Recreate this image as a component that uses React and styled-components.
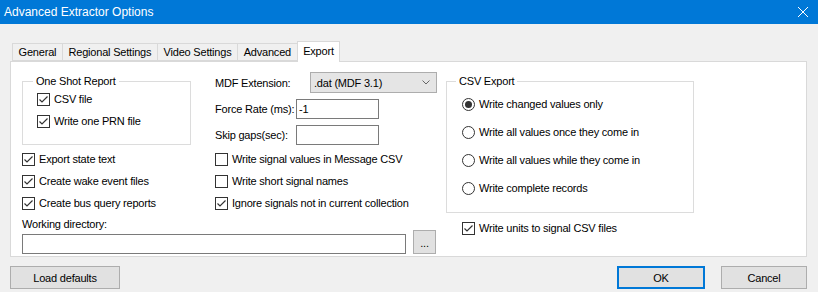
import React from "react";
import styled, { createGlobalStyle } from "styled-components";

const GlobalStyle = createGlobalStyle`
  html, body {
    margin: 0;
    padding: 0;
    background: #f0f0f0;
  }
  * {
    box-sizing: border-box;
  }
`;

const Window = styled.div`
  width: 818px;
  height: 292px;
  background: #f0f0f0;
  font-family: "Liberation Sans", Arial, sans-serif;
  font-size: 11px;
  letter-spacing: -0.2px;
  color: #000;
  display: flex;
  flex-direction: column;
  overflow: hidden;
`;

const TitleBar = styled.div`
  height: 24px;
  background: #0078d7;
  color: #fff;
  font-size: 12px;
  letter-spacing: 0;
  display: flex;
  align-items: center;
  justify-content: space-between;
  padding: 0 9px 0 4px;
`;

const CloseButton = styled.span`
  display: flex;
  width: 12px;
  height: 12px;
`;

const Body = styled.div`
  flex: 1;
  display: flex;
  flex-direction: column;
  padding: 17px 11px 0 10px;
`;

const TabStrip = styled.div`
  display: flex;
  align-items: flex-end;
  height: 20px;
  padding-left: 3px;
  position: relative;
  z-index: 1;
`;

const Tab = styled.div`
  height: ${(p) => (p.active ? "21px" : "18px")};
  margin-bottom: ${(p) => (p.active ? "-1px" : "0")};
  margin-left: -1px;
  padding: ${(p) => (p.active ? "2px 5.6px 0" : "1px 5.6px 0")};
  border: 1px solid #d9d9d9;
  border-bottom: ${(p) => (p.active ? "none" : "1px solid #d9d9d9")};
  background: ${(p) => (p.active ? "#fff" : "#f0f0f0")};
  white-space: nowrap;
  line-height: 14px;
`;

const Panel = styled.div`
  height: 196px;
  background: #fff;
  border: 1px solid #d9d9d9;
  padding: 10px 0 0 11px;
  display: grid;
  grid-template-columns: 415px 248px;
  column-gap: 9px;
  align-items: start;
`;

const LeftArea = styled.div`
  display: grid;
  grid-template-columns: 193px 222px;
`;

const RightArea = styled.div`
  display: flex;
  flex-direction: column;
`;

const Group = styled.fieldset`
  margin: 3px 0 0;
  padding: 0 0 ${(p) => p.$bottom || "3px"} ${(p) => p.$inset || "14px"};
  border: 1px solid #dcdcdc;
  width: ${(p) => p.$width};
  min-width: 0;
`;

const Legend = styled.legend`
  margin-left: ${(p) => p.$offset || "-4px"};
  padding: 0 3px;
  line-height: 13px;
`;

const Row = styled.label`
  display: flex;
  align-items: center;
  gap: 4px;
  height: ${(p) => p.$h || "22px"};
  white-space: nowrap;
`;

const Box = styled.span`
  width: 13px;
  height: 13px;
  border: 1px solid #333;
  background: #fff;
  display: flex;
  align-items: center;
  justify-content: center;
  flex: none;
`;

const Round = styled.span`
  width: 13px;
  height: 13px;
  border: 1px solid #333;
  border-radius: 50%;
  background: #fff;
  display: flex;
  align-items: center;
  justify-content: center;
  flex: none;

  &::after {
    content: "";
    display: ${(p) => (p.checked ? "block" : "none")};
    width: 7px;
    height: 7px;
    border-radius: 50%;
    background: #333;
  }
`;

const Form = styled.div`
  display: flex;
  flex-direction: column;
  gap: 6px;
`;

const FieldRow = styled.div`
  display: flex;
  align-items: center;
`;

const FieldLabel = styled.span`
  width: ${(p) => p.$width || "auto"};
  white-space: nowrap;
`;

const Select = styled.div`
  width: 127px;
  height: 21px;
  background: #e5e5e5;
  border: 1px solid #adadad;
  display: flex;
  align-items: center;
  justify-content: space-between;
  padding: 0 6px 0 3px;
`;

const Input = styled.div`
  width: ${(p) => p.$width || "83px"};
  height: 20px;
  border: 1px solid #7a7a7a;
  background: #fff;
  padding: 2px 2px;
  line-height: 14px;
`;

const Checks = styled.div`
  display: flex;
  flex-direction: column;
  margin-top: ${(p) => p.$top || "3px"};
  padding-left: ${(p) => p.$inset || "0"};
`;

const Directory = styled.div`
  grid-column: 1 / 3;
  display: flex;
  flex-direction: column;
  margin-top: 4px;
`;

const DirRow = styled.div`
  display: flex;
  align-items: flex-end;
  gap: 7px;
`;

const SmallButton = styled.div`
  width: 23px;
  height: 24px;
  background: #e1e1e1;
  border: 1px solid #adadad;
  display: flex;
  align-items: flex-end;
  justify-content: center;
  padding-bottom: 5px;
  line-height: 10px;
`;

const Spacer = styled.div`
  height: 2px;
`;

const Footer = styled.div`
  display: flex;
  align-items: center;
  margin-top: 9px;
  gap: 16px;
`;

const Button = styled.div`
  width: ${(p) => p.$width};
  height: 23px;
  background: #e1e1e1;
  border: ${(p) => (p.$default ? "2px solid #0078d7" : "1px solid #adadad")};
  display: flex;
  align-items: center;
  justify-content: center;
  margin-left: ${(p) => (p.$push ? "auto" : "0")};
`;

const Check = ({ checked }) => (
  <Box>
    {checked && (
      <svg width="11" height="11" viewBox="0 0 11 11">
        <path d="M1.5 5.5 L4 8 L9.5 2.5" fill="none" stroke="#333" strokeWidth="1.2" />
      </svg>
    )}
  </Box>
);

const CheckRow = ({ checked, children, h }) => (
  <Row $h={h}>
    <Check checked={checked} />
    <span>{children}</span>
  </Row>
);

const RadioRow = ({ checked, children }) => (
  <Row $h="28px">
    <Round checked={checked} />
    <span>{children}</span>
  </Row>
);

const tabs = ["General", "Regional Settings", "Video Settings", "Advanced", "Export"];
const radios = [
  "Write changed values only",
  "Write all values once they come in",
  "Write all values while they come in",
  "Write complete records",
];

export default function App() {
  return (
    <Window>
      <GlobalStyle />
      <TitleBar>
        <span>Advanced Extractor Options</span>
        <CloseButton>
          <svg width="12" height="12" viewBox="0 0 12 12">
            <path d="M1 1 L11 11 M11 1 L1 11" stroke="#fff" strokeWidth="1" fill="none" />
          </svg>
        </CloseButton>
      </TitleBar>
      <Body>
        <TabStrip>
          {tabs.map((t) => (
            <Tab key={t} active={t === "Export"}>
              {t}
            </Tab>
          ))}
        </TabStrip>
        <Panel>
          <LeftArea>
            <Group $width="169px">
              <Legend>One Shot Report</Legend>
              <CheckRow checked>CSV file</CheckRow>
              <CheckRow checked>Write one PRN file</CheckRow>
            </Group>
            <Form>
              <FieldRow>
                <FieldLabel $width="95px">MDF Extension:</FieldLabel>
                <Select>
                  <span>.dat (MDF 3.1)</span>
                  <svg width="8" height="5" viewBox="0 0 8 5">
                    <path d="M0.5 0.5 L4 4 L7.5 0.5" fill="none" stroke="#666" strokeWidth="1" />
                  </svg>
                </Select>
              </FieldRow>
              <FieldRow>
                <FieldLabel $width="81px">Force Rate (ms):</FieldLabel>
                <Input>-1</Input>
              </FieldRow>
              <FieldRow>
                <FieldLabel $width="81px">Skip gaps(sec):</FieldLabel>
                <Input />
              </FieldRow>
            </Form>
            <Checks>
              <CheckRow checked>Export state text</CheckRow>
              <CheckRow checked>Create wake event files</CheckRow>
              <CheckRow checked>Create bus query reports</CheckRow>
            </Checks>
            <Checks>
              <CheckRow>Write signal values in Message CSV</CheckRow>
              <CheckRow>Write short signal names</CheckRow>
              <CheckRow checked>Ignore signals not in current collection</CheckRow>
            </Checks>
            <Directory>
              <span>Working directory:</span>
              <DirRow>
                <Input $width="384px" />
                <SmallButton>...</SmallButton>
              </DirRow>
            </Directory>
          </LeftArea>
          <RightArea>
            <Group $width="248px" $inset="15px" $bottom="10px">
              <Legend $offset="-6px">CSV Export</Legend>
              <Spacer />
              {radios.map((r, i) => (
                <RadioRow key={r} checked={i === 0}>
                  {r}
                </RadioRow>
              ))}
            </Group>
            <Checks $top="4px" $inset="16px">
              <CheckRow checked>Write units to signal CSV files</CheckRow>
            </Checks>
          </RightArea>
        </Panel>
        <Footer>
          <Button $width="110px">Load defaults</Button>
          <Button $width="88px" $default $push>
            OK
          </Button>
          <Button $width="86px">Cancel</Button>
        </Footer>
      </Body>
    </Window>
  );
}
